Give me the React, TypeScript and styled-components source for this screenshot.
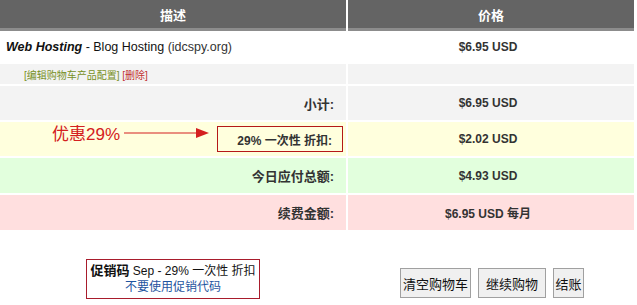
import styled, { createGlobalStyle } from "styled-components";

const GlobalStyle = createGlobalStyle`
  body {
    margin: 0;
    background: #fff;
    font-family: "Liberation Sans", "Noto Sans CJK SC", sans-serif;
    font-size: 12px;
    color: #222;
  }
`;

const Page = styled.div`
  position: relative;
  width: 637px;
  height: 305px;
  overflow: hidden;
`;

const Cart = styled.div`
  display: grid;
  grid-template-columns: 346px 286px;
  column-gap: 2px;
  row-gap: 2px;
  width: 634px;
`;

const HeadCell = styled.div`
  height: 28px;
  background: #646464;
  border-bottom: 3px solid #8c8c8c;
  color: #fff;
  font-size: 13px;
  font-weight: bold;
  display: flex;
  align-items: center;
  justify-content: center;
  margin-bottom: -2px;
`;

const tones: Record<string, string> = {
  white: "#ffffff",
  gray: "#f3f3f3",
  yellow: "#ffffdd",
  green: "#e2ffdd",
  pink: "#ffdfdf",
};

const Cell = styled.div<{ $tone: string; $h: number; $align: string }>`
  height: ${(p) => p.$h}px;
  background: ${(p) => tones[p.$tone]};
  display: flex;
  align-items: center;
  justify-content: ${(p) => p.$align};
  padding: 0 12px 0 6px;
  box-sizing: border-box;
`;

const Product = styled.span`
  font-size: 12.5px;
  color: #111;
  em {
    font-weight: bold;
  }
`;

const Muted = styled.span`
  color: #333;
`;

const Links = styled.div`
  padding-left: 18px;
  font-size: 10px;
`;

const EditLink = styled.a`
  color: #77901e;
  text-decoration: none;
`;

const DeleteLink = styled.a`
  color: #c23030;
  text-decoration: none;
`;

const Label = styled.span`
  font-size: 13px;
  font-weight: bold;
  color: #333;
  white-space: nowrap;
`;

const BoxedLabel = styled(Label)`
  font-size: 12px;
  box-sizing: border-box;
  width: 126px;
  height: 26px;
  margin-right: -9px;
  border: 1px solid #b51818;
  padding-right: 10px;
  display: flex;
  align-items: center;
  justify-content: flex-end;
`;

const Price = styled.span`
  font-weight: bold;
  color: #333;
`;

const Note = styled.div`
  position: absolute;
  left: 52px;
  top: 120px;
  display: flex;
  align-items: center;
  gap: 4px;
  color: #d42020;
  font-size: 17px;
`;

const Bottom = styled.div`
  display: grid;
  grid-template-columns: 346px 286px;
  column-gap: 2px;
  width: 634px;
`;

const PromoSlot = styled.div`
  display: flex;
  justify-content: center;
  padding-top: 29px;
`;

const PromoBox = styled.div`
  border: 1px solid #a81c2c;
  padding: 3px 3px 3px;
  text-align: center;
  line-height: 16px;
  color: #111;
  font-size: 12px;
  b {
    font-size: 13px;
  }
`;

const PromoLink = styled.a`
  color: #1f55a0;
  text-decoration: none;
`;

const Actions = styled.div`
  display: flex;
  gap: 7px;
  padding-top: 38px;
  padding-left: 52px;
`;

const Button = styled.button<{ $w: number }>`
  width: ${(p) => p.$w}px;
  height: 30px;
  padding: 0;
  background: #f0f0f0;
  border: 1px solid #a0a0a0;
  font-family: "Noto Sans CJK SC", sans-serif;
  font-size: 13px;
  color: #111;
`;

export default function App() {
  return (
    <Page>
      <GlobalStyle />
      <Cart>
        <HeadCell>描述</HeadCell>
        <HeadCell>价格</HeadCell>

        <Cell $tone="white" $h={31} $align="flex-start">
          <Product>
            <em>Web Hosting</em> - Blog Hosting <Muted>(idcspy.org)</Muted>
          </Product>
        </Cell>
        <Cell $tone="white" $h={31} $align="center">
          <Price>$6.95 USD</Price>
        </Cell>

        <Cell $tone="gray" $h={20} $align="flex-start">
          <Links>
            <EditLink href="#">[编辑购物车产品配置]</EditLink>{" "}
            <DeleteLink href="#">[删除]</DeleteLink>
          </Links>
        </Cell>
        <Cell $tone="gray" $h={20} $align="center" />

        <Cell $tone="gray" $h={34} $align="flex-end">
          <Label>小计:</Label>
        </Cell>
        <Cell $tone="gray" $h={34} $align="center">
          <Price>$6.95 USD</Price>
        </Cell>

        <Cell $tone="yellow" $h={34} $align="flex-end">
          <BoxedLabel>29% 一次性 折扣:</BoxedLabel>
        </Cell>
        <Cell $tone="yellow" $h={34} $align="center">
          <Price>$2.02 USD</Price>
        </Cell>

        <Cell $tone="green" $h={35} $align="flex-end">
          <Label>今日应付总额:</Label>
        </Cell>
        <Cell $tone="green" $h={35} $align="center">
          <Price>$4.93 USD</Price>
        </Cell>

        <Cell $tone="pink" $h={35} $align="flex-end">
          <Label>续费金额:</Label>
        </Cell>
        <Cell $tone="pink" $h={35} $align="center">
          <Price>$6.95 USD 每月</Price>
        </Cell>
      </Cart>

      <Bottom>
        <PromoSlot>
          <PromoBox>
            <b>促销码</b> Sep - 29% 一次性 折扣
            <br />
            <PromoLink href="#">不要使用促销代码</PromoLink>
          </PromoBox>
        </PromoSlot>
        <Actions>
          <Button $w={71}>清空购物车</Button>
          <Button $w={68}>继续购物</Button>
          <Button $w={31}>结账</Button>
        </Actions>
      </Bottom>

      <Note>
        <span>优惠29%</span>
        <svg width="86" height="12" viewBox="0 0 86 12">
          <line x1="0" y1="6" x2="74" y2="6" stroke="#d42020" strokeWidth="1.2" />
          <polygon points="72,1 85,6 72,11" fill="#d42020" />
        </svg>
      </Note>
    </Page>
  );
}
